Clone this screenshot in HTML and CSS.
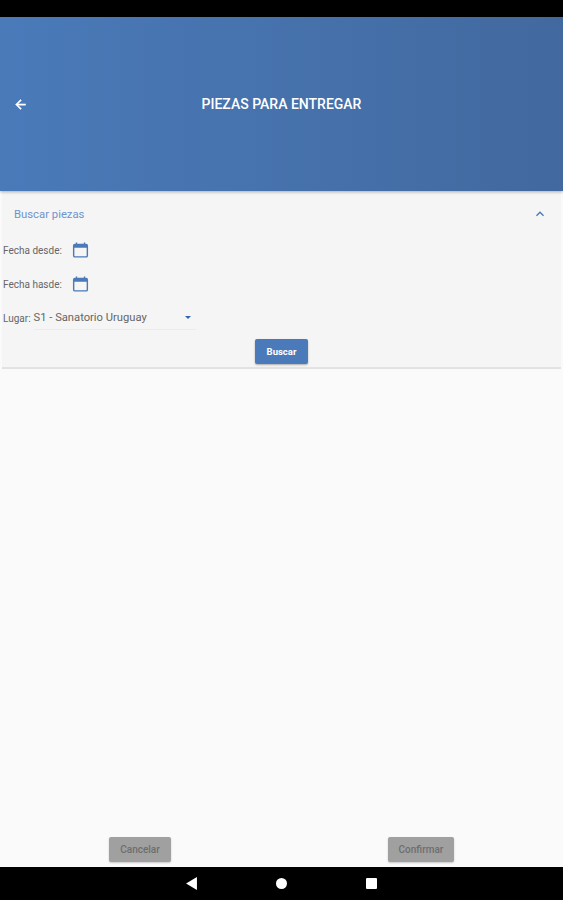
FILE: index.html
```html
<!DOCTYPE html>
<html lang="es">

<head>
    <meta charset="UTF-8">
    <meta name="viewport" content="width=device-width, initial-scale=1.0">
    <title>Piezas para entregar</title>
    <link rel="stylesheet" href="styles.css">
</head>

<body>
    <div class="status-bar"></div>

    <header class="toolbar">
        <svg class="back-icon" viewBox="0 0 24 24"><path d="M20 11H7.83l5.59-5.59L12 4l-8 8 8 8 1.41-1.41L7.83 13H20v-2z"/></svg>
        <h1>PIEZAS PARA ENTREGAR</h1>
    </header>

    <main class="content">
        <section class="search-panel">
            <div class="panel-header">
                <span class="panel-title">Buscar piezas</span>
                <svg class="chevron" viewBox="0 0 24 24"><path d="M12 8l-6 6 1.41 1.41L12 10.83l4.59 4.58L18 14z"/></svg>
            </div>
            <div class="date-row">
                <span class="field-label">Fecha desde:</span>
                <svg class="calendar" viewBox="0 0 18 18"><path d="M4 1v1.5H3A2 2 0 0 0 1 4.500V15a2 2 0 0 0 2 2h12a2 2 0 0 0 2-2V4.500a2 2 0 0 0-2-2h-1V1h-1.500v1.500h-7V1zM2.500 6.500h13V15a.5.5 0 0 1-.5.5H3a.5.5 0 0 1-.5-.5z"/></svg>
            </div>
            <div class="date-row">
                <span class="field-label">Fecha hasde:</span>
                <svg class="calendar" viewBox="0 0 18 18"><path d="M4 1v1.500H3A2 2 0 0 0 1 4.500V15a2 2 0 0 0 2 2h12a2 2 0 0 0 2-2V4.500a2 2 0 0 0-2-2h-1V1h-1.500v1.500h-7V1zM2.500 6.500h13V15a.5.5 0 0 1-.5.5H3a.5.5 0 0 1-.5-.5z"/></svg>
            </div>
            <div class="place-row">
                <span class="field-label">Lugar:</span>
                <div class="place-select">
                    <span>S1 - Sanatorio Uruguay</span>
                    <span class="caret"></span>
                </div>
            </div>
            <div class="search-action">
                <button class="btn-search">Buscar</button>
            </div>
        </section>
    </main>

    <footer class="actions">
        <button class="btn-off btn-cancel">Cancelar</button>
        <button class="btn-off btn-confirm">Confirmar</button>
    </footer>

    <nav class="nav-bar">
        <svg class="nav-icon" viewBox="0 0 10 12"><path d="M10 0v12L0 6z"/></svg>
        <span class="nav-home"></span>
        <span class="nav-recent"></span>
    </nav>
</body>

</html>
```

FILE: styles.css
```css
* {
    box-sizing: border-box;
}

body {
    margin: 0;
    height: 900px;
    display: flex;
    flex-direction: column;
    font-family: Roboto, "Liberation Sans", sans-serif;
    background-color: #fafafa;
    overflow: hidden;
}

.status-bar {
    height: 17px;
    background-color: #000;
}

.toolbar {
    height: 174px;
    padding: 0 13px;
    display: flex;
    align-items: center;
    background: linear-gradient(90deg, #4a7ab9, #42699f);
    box-shadow: 0 1px 3px rgba(0, 0, 0, 0.3);
    position: relative;
    z-index: 1;
}

.back-icon {
    width: 15px;
    height: 15px;
    fill: #fff;
    stroke: #fff;
    stroke-width: 0.8;
}

.toolbar h1 {
    flex: 1;
    margin: 0 15px 0 0;
    text-align: center;
    color: #fff;
    font-size: 14px;
    font-weight: 500;
}

.content {
    flex: 1;
    padding: 0 2px;
}

.search-panel {
    height: 178px;
    background-color: #f5f5f5;
    border-bottom: 2px solid #e2e2e2;
}

.panel-header {
    height: 42px;
    padding: 4px 13px 0 12px;
    display: flex;
    align-items: center;
    justify-content: space-between;
}

.panel-title {
    color: #6f94cc;
    font-size: 11.300px;
}

.chevron {
    width: 16px;
    height: 16px;
    fill: #4a7ab9;
}

.date-row {
    height: 34px;
    padding-left: 1px;
    display: flex;
    align-items: center;
    gap: 10px;
}

.field-label {
    color: #666;
    font-size: 10px;
}

.calendar {
    width: 17px;
    height: 18px;
    fill: #4a7ab9;
}

.place-row {
    height: 34px;
    padding-left: 1px;
    display: flex;
    align-items: center;
    gap: 3px;
    color: #666;
}

.place-select {
    width: 162px;
    height: 24px;
    padding-right: 5px;
    display: flex;
    align-items: center;
    justify-content: space-between;
    font-size: 11.200px;
    border-bottom: 1px solid #ececec;
}

.caret {
    border-left: 3px solid transparent;
    border-right: 3px solid transparent;
    border-top: 3px solid #2f66ad;
}

.search-action {
    padding-top: 4px;
    display: flex;
    justify-content: center;
}

.btn-search {
    width: 53px;
    height: 25px;
    padding: 0;
    border: none;
    border-radius: 2px;
    background-color: #4a7ab9;
    color: #fff;
    font-family: inherit;
    font-size: 9.500px;
    font-weight: 700;
    box-shadow: 0 1px 2px rgba(0, 0, 0, 0.3);
}

.actions {
    height: 35px;
    padding: 5px 109px 0;
    display: flex;
    justify-content: space-between;
    align-items: flex-start;
}

.btn-off {
    height: 25px;
    padding: 0;
    border: none;
    border-radius: 2px;
    background-color: #a0a0a0;
    color: #6e6e6e;
    font-family: inherit;
    font-size: 10px;
    font-weight: 500;
    box-shadow: 0 1px 2px rgba(0, 0, 0, 0.2);
}

.btn-cancel {
    width: 62px;
}

.btn-confirm {
    width: 66px;
}

.nav-bar {
    height: 33px;
    padding: 0 186px;
    display: flex;
    align-items: center;
    justify-content: space-between;
    background-color: #000;
}

.nav-icon {
    width: 11px;
    height: 13px;
    fill: #fff;
}

.nav-home {
    width: 11px;
    height: 11px;
    border-radius: 50%;
    background-color: #fff;
}

.nav-recent {
    width: 11px;
    height: 11px;
    border-radius: 1px;
    background-color: #fff;
}
```
